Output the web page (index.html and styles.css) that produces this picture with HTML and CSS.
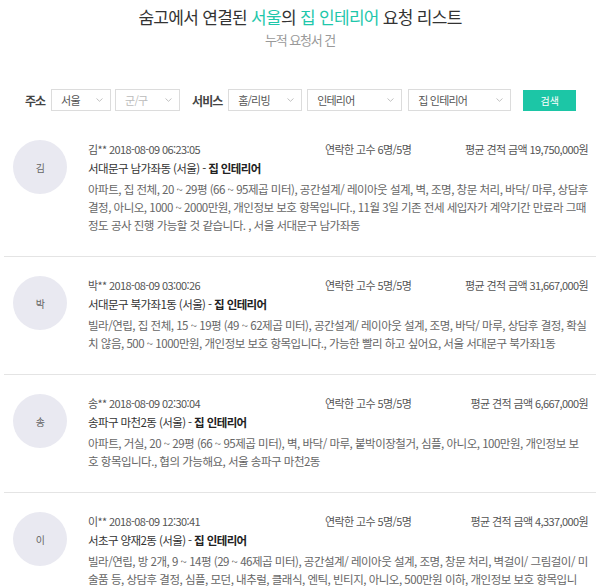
FILE: index.html
```html
<!DOCTYPE html>
<html lang="ko">
<head>
	<meta charset="utf-8">
	<title>요청 리스트</title>
	<link rel="stylesheet" href="styles.css">
</head>
<body>
<div class="header">
	<h1 class="title">숨고에서 연결된 <span class="hl">서울</span>의 <span class="hl">집 인테리어</span> 요청 리스트</h1>
	<p class="count">누적 요청서 건</p>
</div>

<div class="filters">
	<span class="label">주소</span>
	<div class="select w-city">서울<svg class="chev" width="7" height="4" viewBox="0 0 7 4"><path d="M0.5 0.5 L3.5 3.3 L6.5 0.5" fill="none" stroke="#bbb" stroke-width="0.9"/></svg></div>
	<div class="select w-gu placeholder">군/구<svg class="chev" width="7" height="4" viewBox="0 0 7 4"><path d="M0.5 0.5 L3.5 3.3 L6.5 0.5" fill="none" stroke="#bbb" stroke-width="0.9"/></svg></div>
	<span class="label label-service">서비스</span>
	<div class="select w-cat">홈/리빙<svg class="chev" width="7" height="4" viewBox="0 0 7 4"><path d="M0.5 0.5 L3.5 3.3 L6.5 0.5" fill="none" stroke="#bbb" stroke-width="0.9"/></svg></div>
	<div class="select w-sub">인테리어<svg class="chev" width="7" height="4" viewBox="0 0 7 4"><path d="M0.5 0.5 L3.5 3.3 L6.5 0.5" fill="none" stroke="#bbb" stroke-width="0.9"/></svg></div>
	<div class="select w-svc">집 인테리어<svg class="chev" width="7" height="4" viewBox="0 0 7 4"><path d="M0.5 0.5 L3.5 3.3 L6.5 0.5" fill="none" stroke="#bbb" stroke-width="0.9"/></svg></div>
	<button class="search">검색</button>
</div>

<ul class="requests">
	<li class="request">
		<div class="avatar">김</div>
		<div class="body">
			<div class="meta">
				<span class="who">김** 2018-08-09 06:23:05</span>
				<span class="stat">연락한 고수 6명/5명</span>
				<span class="stat price">평균 견적 금액 19,750,000원</span>
			</div>
			<div class="place">서대문구 남가좌동 (서울) - <b>집 인테리어</b></div>
			<p class="desc">아파트, 집 전체, 20 ~ 29평 (66 ~ 95제곱 미터), 공간설계/ 레이아웃 설계, 벽, 조명, 창문 처리, 바닥/ 마루, 상담후 결정, 아니오, 1000 ~ 2000만원, 개인정보 보호 항목입니다., 11월 3일 기존 전세 세입자가 계약기간 만료라 그때 정도 공사 진행 가능할 것 같습니다. , 서울 서대문구 남가좌동</p>
		</div>
	</li>
	<li class="request">
		<div class="avatar">박</div>
		<div class="body">
			<div class="meta">
				<span class="who">박** 2018-08-09 03:00:26</span>
				<span class="stat">연락한 고수 5명/5명</span>
				<span class="stat price">평균 견적 금액 31,667,000원</span>
			</div>
			<div class="place">서대문구 북가좌1동 (서울) - <b>집 인테리어</b></div>
			<p class="desc">빌라/연립, 집 전체, 15 ~ 19평 (49 ~ 62제곱 미터), 공간설계/ 레이아웃 설계, 조명, 바닥/ 마루, 상담후 결정, 확실치 않음, 500 ~ 1000만원, 개인정보 보호 항목입니다., 가능한 빨리 하고 싶어요, 서울 서대문구 북가좌1동</p>
		</div>
	</li>
	<li class="request">
		<div class="avatar">송</div>
		<div class="body">
			<div class="meta">
				<span class="who">송** 2018-08-09 02:30:04</span>
				<span class="stat">연락한 고수 5명/5명</span>
				<span class="stat price">평균 견적 금액 6,667,000원</span>
			</div>
			<div class="place">송파구 마천2동 (서울) - <b>집 인테리어</b></div>
			<p class="desc">아파트, 거실, 20 ~ 29평 (66 ~ 95제곱 미터), 벽, 바닥/ 마루, 붙박이장철거, 심플, 아니오, 100만원, 개인정보 보호 항목입니다., 협의 가능해요, 서울 송파구 마천2동</p>
		</div>
	</li>
	<li class="request">
		<div class="avatar">이</div>
		<div class="body">
			<div class="meta">
				<span class="who">이** 2018-08-09 12:30:41</span>
				<span class="stat">연락한 고수 5명/5명</span>
				<span class="stat price">평균 견적 금액 4,337,000원</span>
			</div>
			<div class="place">서초구 양재2동 (서울) - <b>집 인테리어</b></div>
			<p class="desc">빌라/연립, 방 2개, 9 ~ 14평 (29 ~ 46제곱 미터), 공간설계/ 레이아웃 설계, 조명, 창문 처리, 벽걸이/ 그림걸이/ 미술품 등, 상담후 결정, 심플, 모던, 내추럴, 클래식, 엔틱, 빈티지, 아니오, 500만원 이하, 개인정보 보호 항목입니다., 협의 가능해요, 서울 서초구 양재2동</p>
		</div>
	</li>
</ul>
</body>
</html>
```

FILE: styles.css
```css
body {
	margin: 0;
	font-family: "Noto Sans CJK KR", "Noto Sans", sans-serif;
	color: #555;
	background: #fff;
	letter-spacing: -0.6px;
}

.header {
	text-align: center;
	padding-top: 6px;
}

.title {
	margin: 0;
	font-size: 17px;
	line-height: 22px;
	font-weight: normal;
	color: #333;
	letter-spacing: -0.7px;
}

.hl {
	color: #1fc7ab;
}

.count {
	margin: 3px 0 0;
	font-size: 13px;
	line-height: 18px;
	color: #999;
	letter-spacing: -1.1px;
}

/* filter row */
.filters {
	display: flex;
	align-items: center;
	margin-top: 40px;
	padding-left: 25px;
	height: 22px;
}

.label {
	font-size: 12px;
	font-weight: bold;
	color: #444;
	margin-right: 6px;
	letter-spacing: -1px;
}

.label-service {
	margin-left: 12px;
}

.select {
	box-sizing: border-box;
	display: flex;
	align-items: center;
	justify-content: space-between;
	height: 22px;
	padding: 0 7px 0 9px;
	border: 1px solid #dcdcdc;
	font-size: 11px;
	color: #555;
	margin-right: 5px;
	letter-spacing: -0.8px;
}

.select.placeholder {
	color: #bbb;
}

.chev {
	flex: none;
}

.w-city { width: 60px; margin-right: 4px; }
.w-gu { width: 65px; margin-right: 0; }
.w-cat { width: 74px; }
.w-sub { width: 95px; margin-right: 6px; }
.w-svc { width: 103px; margin-right: 12px; }

.search {
	width: 53px;
	height: 21px;
	border: 0;
	padding: 0;
	background: #1cc6a6;
	color: #fff;
	font-family: inherit;
	font-size: 10px;
	letter-spacing: 0;
}

/* list */
.requests {
	list-style: none;
	margin: 10px 4px 0;
	padding: 0;
}

.request {
	display: flex;
	padding: 19px 0 22px 9px;
	border-bottom: 1px solid #e4e4e4;
}

.avatar {
	flex: none;
	width: 54px;
	height: 54px;
	border-radius: 50%;
	background: #e9e9f1;
	color: #666;
	font-size: 10px;
	display: flex;
	align-items: center;
	justify-content: center;
}

.body {
	width: 500px;
	margin-left: 21px;
}

.meta {
	display: grid;
	grid-template-columns: 237px 1fr auto;
	font-size: 11px;
	line-height: 19px;
	color: #555;
}

.price {
	text-align: right;
}

.place {
	font-size: 11.5px;
	line-height: 19px;
	color: #333;
}

.place b {
	color: #222;
}

.desc {
	margin: 2px 0 0;
	font-size: 11.5px;
	line-height: 18px;
	color: #666;
	letter-spacing: -0.5px;
}
```
